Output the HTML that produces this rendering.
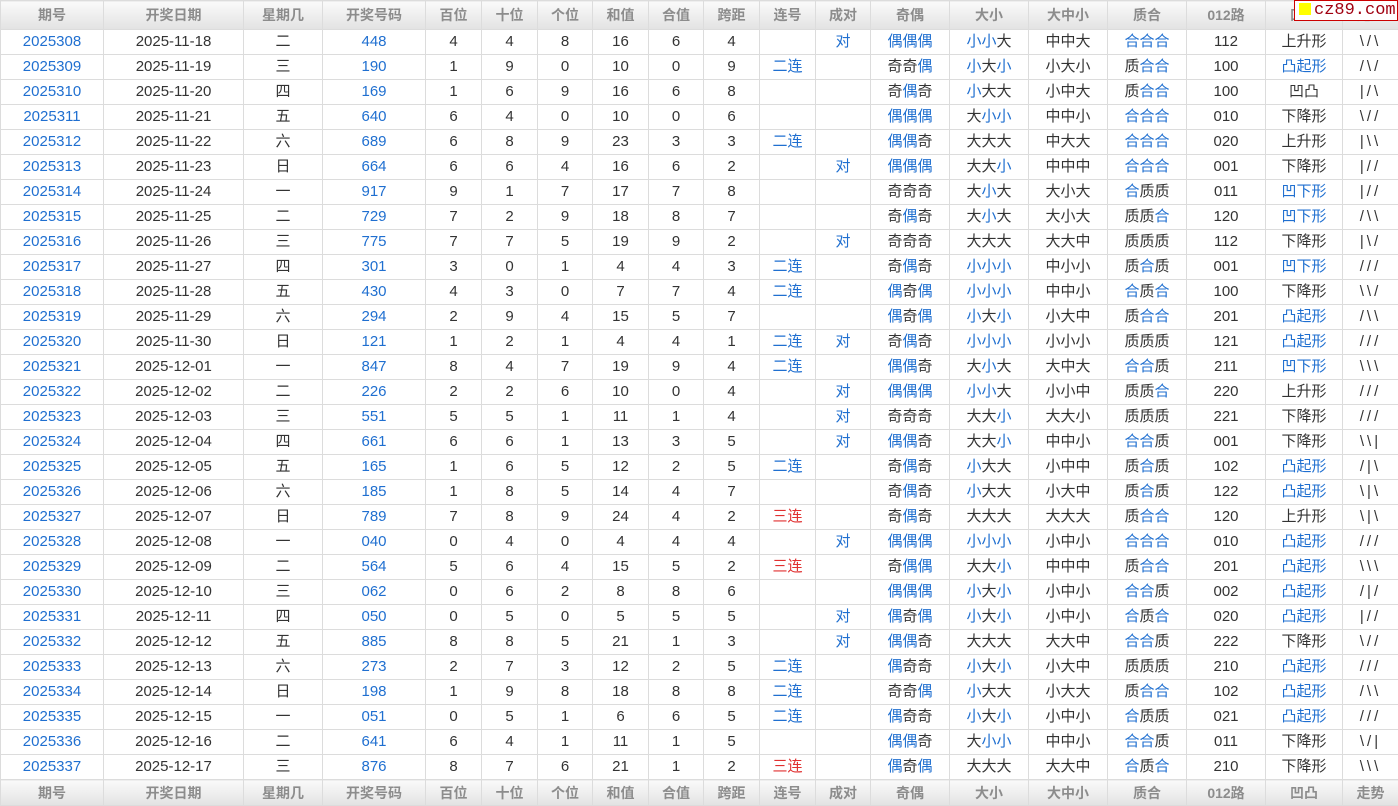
<!DOCTYPE html>
<html><head><meta charset="utf-8"><style>
body{margin:0;background:#fff;font-family:"Liberation Sans","Noto Sans CJK SC",sans-serif;}
table{border-collapse:collapse;table-layout:fixed;width:1398px;font-size:15px;color:#333;}
td,th{border:1px solid #dcdcdc;text-align:center;padding:0;white-space:nowrap;overflow:hidden;}
tr.d td{height:24px;line-height:24px;}
th{height:28px;background:linear-gradient(#fafafa,#e2e2e2);color:#8c8c8c;font-weight:bold;font-size:14px;}
tr.f th{height:25px;}
em{font-style:normal;color:#1f6fd0;}
.r{color:#e03030;}
td.q{color:#1f6fd0;}
td:last-child{letter-spacing:3px;}
#logo{position:absolute;left:1294px;top:0;width:104px;height:21px;background:#fff;border:1px solid #c00;box-sizing:border-box;font-family:"Liberation Mono",monospace;color:#a00010;font-size:17px;line-height:19px;white-space:nowrap;overflow:hidden;}
#logo span{display:inline-block;width:12px;height:12px;background:#ff0;margin:0 3px 0 4px;vertical-align:-1px;}
</style></head><body>
<div id="logo"><span></span>cz89.com</div>
<table>
<colgroup><col style="width:103px"><col style="width:140px"><col style="width:79px"><col style="width:103px"><col style="width:56px"><col style="width:56px"><col style="width:55px"><col style="width:56px"><col style="width:55px"><col style="width:56px"><col style="width:56px"><col style="width:55px"><col style="width:79px"><col style="width:79px"><col style="width:79px"><col style="width:79px"><col style="width:79px"><col style="width:77px"><col style="width:56px"></colgroup>
<tr><th>期号</th><th>开奖日期</th><th>星期几</th><th>开奖号码</th><th>百位</th><th>十位</th><th>个位</th><th>和值</th><th>合值</th><th>跨距</th><th>连号</th><th>成对</th><th>奇偶</th><th>大小</th><th>大中小</th><th>质合</th><th>012路</th><th>凹凸</th><th>走势</th></tr>
<tr class="d"><td class="q">2025308</td><td>2025-11-18</td><td>二</td><td class="q">448</td><td>4</td><td>4</td><td>8</td><td>16</td><td>6</td><td>4</td><td></td><td><em>对</em></td><td><em>偶偶偶</em></td><td><em>小小</em>大</td><td>中中大</td><td><em>合合合</em></td><td>112</td><td>上升形</td><td>\/\</td></tr>
<tr class="d"><td class="q">2025309</td><td>2025-11-19</td><td>三</td><td class="q">190</td><td>1</td><td>9</td><td>0</td><td>10</td><td>0</td><td>9</td><td><em>二连</em></td><td></td><td>奇奇<em>偶</em></td><td><em>小</em>大<em>小</em></td><td>小大小</td><td>质<em>合合</em></td><td>100</td><td><em>凸起形</em></td><td>/\/</td></tr>
<tr class="d"><td class="q">2025310</td><td>2025-11-20</td><td>四</td><td class="q">169</td><td>1</td><td>6</td><td>9</td><td>16</td><td>6</td><td>8</td><td></td><td></td><td>奇<em>偶</em>奇</td><td><em>小</em>大大</td><td>小中大</td><td>质<em>合合</em></td><td>100</td><td>凹凸</td><td>|/\</td></tr>
<tr class="d"><td class="q">2025311</td><td>2025-11-21</td><td>五</td><td class="q">640</td><td>6</td><td>4</td><td>0</td><td>10</td><td>0</td><td>6</td><td></td><td></td><td><em>偶偶偶</em></td><td>大<em>小小</em></td><td>中中小</td><td><em>合合合</em></td><td>010</td><td>下降形</td><td>\//</td></tr>
<tr class="d"><td class="q">2025312</td><td>2025-11-22</td><td>六</td><td class="q">689</td><td>6</td><td>8</td><td>9</td><td>23</td><td>3</td><td>3</td><td><em>二连</em></td><td></td><td><em>偶偶</em>奇</td><td>大大大</td><td>中大大</td><td><em>合合合</em></td><td>020</td><td>上升形</td><td>|\\</td></tr>
<tr class="d"><td class="q">2025313</td><td>2025-11-23</td><td>日</td><td class="q">664</td><td>6</td><td>6</td><td>4</td><td>16</td><td>6</td><td>2</td><td></td><td><em>对</em></td><td><em>偶偶偶</em></td><td>大大<em>小</em></td><td>中中中</td><td><em>合合合</em></td><td>001</td><td>下降形</td><td>|//</td></tr>
<tr class="d"><td class="q">2025314</td><td>2025-11-24</td><td>一</td><td class="q">917</td><td>9</td><td>1</td><td>7</td><td>17</td><td>7</td><td>8</td><td></td><td></td><td>奇奇奇</td><td>大<em>小</em>大</td><td>大小大</td><td><em>合</em>质质</td><td>011</td><td><em>凹下形</em></td><td>|//</td></tr>
<tr class="d"><td class="q">2025315</td><td>2025-11-25</td><td>二</td><td class="q">729</td><td>7</td><td>2</td><td>9</td><td>18</td><td>8</td><td>7</td><td></td><td></td><td>奇<em>偶</em>奇</td><td>大<em>小</em>大</td><td>大小大</td><td>质质<em>合</em></td><td>120</td><td><em>凹下形</em></td><td>/\\</td></tr>
<tr class="d"><td class="q">2025316</td><td>2025-11-26</td><td>三</td><td class="q">775</td><td>7</td><td>7</td><td>5</td><td>19</td><td>9</td><td>2</td><td></td><td><em>对</em></td><td>奇奇奇</td><td>大大大</td><td>大大中</td><td>质质质</td><td>112</td><td>下降形</td><td>|\/</td></tr>
<tr class="d"><td class="q">2025317</td><td>2025-11-27</td><td>四</td><td class="q">301</td><td>3</td><td>0</td><td>1</td><td>4</td><td>4</td><td>3</td><td><em>二连</em></td><td></td><td>奇<em>偶</em>奇</td><td><em>小小小</em></td><td>中小小</td><td>质<em>合</em>质</td><td>001</td><td><em>凹下形</em></td><td>///</td></tr>
<tr class="d"><td class="q">2025318</td><td>2025-11-28</td><td>五</td><td class="q">430</td><td>4</td><td>3</td><td>0</td><td>7</td><td>7</td><td>4</td><td><em>二连</em></td><td></td><td><em>偶</em>奇<em>偶</em></td><td><em>小小小</em></td><td>中中小</td><td><em>合</em>质<em>合</em></td><td>100</td><td>下降形</td><td>\\/</td></tr>
<tr class="d"><td class="q">2025319</td><td>2025-11-29</td><td>六</td><td class="q">294</td><td>2</td><td>9</td><td>4</td><td>15</td><td>5</td><td>7</td><td></td><td></td><td><em>偶</em>奇<em>偶</em></td><td><em>小</em>大<em>小</em></td><td>小大中</td><td>质<em>合合</em></td><td>201</td><td><em>凸起形</em></td><td>/\\</td></tr>
<tr class="d"><td class="q">2025320</td><td>2025-11-30</td><td>日</td><td class="q">121</td><td>1</td><td>2</td><td>1</td><td>4</td><td>4</td><td>1</td><td><em>二连</em></td><td><em>对</em></td><td>奇<em>偶</em>奇</td><td><em>小小小</em></td><td>小小小</td><td>质质质</td><td>121</td><td><em>凸起形</em></td><td>///</td></tr>
<tr class="d"><td class="q">2025321</td><td>2025-12-01</td><td>一</td><td class="q">847</td><td>8</td><td>4</td><td>7</td><td>19</td><td>9</td><td>4</td><td><em>二连</em></td><td></td><td><em>偶偶</em>奇</td><td>大<em>小</em>大</td><td>大中大</td><td><em>合合</em>质</td><td>211</td><td><em>凹下形</em></td><td>\\\</td></tr>
<tr class="d"><td class="q">2025322</td><td>2025-12-02</td><td>二</td><td class="q">226</td><td>2</td><td>2</td><td>6</td><td>10</td><td>0</td><td>4</td><td></td><td><em>对</em></td><td><em>偶偶偶</em></td><td><em>小小</em>大</td><td>小小中</td><td>质质<em>合</em></td><td>220</td><td>上升形</td><td>///</td></tr>
<tr class="d"><td class="q">2025323</td><td>2025-12-03</td><td>三</td><td class="q">551</td><td>5</td><td>5</td><td>1</td><td>11</td><td>1</td><td>4</td><td></td><td><em>对</em></td><td>奇奇奇</td><td>大大<em>小</em></td><td>大大小</td><td>质质质</td><td>221</td><td>下降形</td><td>///</td></tr>
<tr class="d"><td class="q">2025324</td><td>2025-12-04</td><td>四</td><td class="q">661</td><td>6</td><td>6</td><td>1</td><td>13</td><td>3</td><td>5</td><td></td><td><em>对</em></td><td><em>偶偶</em>奇</td><td>大大<em>小</em></td><td>中中小</td><td><em>合合</em>质</td><td>001</td><td>下降形</td><td>\\|</td></tr>
<tr class="d"><td class="q">2025325</td><td>2025-12-05</td><td>五</td><td class="q">165</td><td>1</td><td>6</td><td>5</td><td>12</td><td>2</td><td>5</td><td><em>二连</em></td><td></td><td>奇<em>偶</em>奇</td><td><em>小</em>大大</td><td>小中中</td><td>质<em>合</em>质</td><td>102</td><td><em>凸起形</em></td><td>/|\</td></tr>
<tr class="d"><td class="q">2025326</td><td>2025-12-06</td><td>六</td><td class="q">185</td><td>1</td><td>8</td><td>5</td><td>14</td><td>4</td><td>7</td><td></td><td></td><td>奇<em>偶</em>奇</td><td><em>小</em>大大</td><td>小大中</td><td>质<em>合</em>质</td><td>122</td><td><em>凸起形</em></td><td>\|\</td></tr>
<tr class="d"><td class="q">2025327</td><td>2025-12-07</td><td>日</td><td class="q">789</td><td>7</td><td>8</td><td>9</td><td>24</td><td>4</td><td>2</td><td class="r">三连</td><td></td><td>奇<em>偶</em>奇</td><td>大大大</td><td>大大大</td><td>质<em>合合</em></td><td>120</td><td>上升形</td><td>\|\</td></tr>
<tr class="d"><td class="q">2025328</td><td>2025-12-08</td><td>一</td><td class="q">040</td><td>0</td><td>4</td><td>0</td><td>4</td><td>4</td><td>4</td><td></td><td><em>对</em></td><td><em>偶偶偶</em></td><td><em>小小小</em></td><td>小中小</td><td><em>合合合</em></td><td>010</td><td><em>凸起形</em></td><td>///</td></tr>
<tr class="d"><td class="q">2025329</td><td>2025-12-09</td><td>二</td><td class="q">564</td><td>5</td><td>6</td><td>4</td><td>15</td><td>5</td><td>2</td><td class="r">三连</td><td></td><td>奇<em>偶偶</em></td><td>大大<em>小</em></td><td>中中中</td><td>质<em>合合</em></td><td>201</td><td><em>凸起形</em></td><td>\\\</td></tr>
<tr class="d"><td class="q">2025330</td><td>2025-12-10</td><td>三</td><td class="q">062</td><td>0</td><td>6</td><td>2</td><td>8</td><td>8</td><td>6</td><td></td><td></td><td><em>偶偶偶</em></td><td><em>小</em>大<em>小</em></td><td>小中小</td><td><em>合合</em>质</td><td>002</td><td><em>凸起形</em></td><td>/|/</td></tr>
<tr class="d"><td class="q">2025331</td><td>2025-12-11</td><td>四</td><td class="q">050</td><td>0</td><td>5</td><td>0</td><td>5</td><td>5</td><td>5</td><td></td><td><em>对</em></td><td><em>偶</em>奇<em>偶</em></td><td><em>小</em>大<em>小</em></td><td>小中小</td><td><em>合</em>质<em>合</em></td><td>020</td><td><em>凸起形</em></td><td>|//</td></tr>
<tr class="d"><td class="q">2025332</td><td>2025-12-12</td><td>五</td><td class="q">885</td><td>8</td><td>8</td><td>5</td><td>21</td><td>1</td><td>3</td><td></td><td><em>对</em></td><td><em>偶偶</em>奇</td><td>大大大</td><td>大大中</td><td><em>合合</em>质</td><td>222</td><td>下降形</td><td>\//</td></tr>
<tr class="d"><td class="q">2025333</td><td>2025-12-13</td><td>六</td><td class="q">273</td><td>2</td><td>7</td><td>3</td><td>12</td><td>2</td><td>5</td><td><em>二连</em></td><td></td><td><em>偶</em>奇奇</td><td><em>小</em>大<em>小</em></td><td>小大中</td><td>质质质</td><td>210</td><td><em>凸起形</em></td><td>///</td></tr>
<tr class="d"><td class="q">2025334</td><td>2025-12-14</td><td>日</td><td class="q">198</td><td>1</td><td>9</td><td>8</td><td>18</td><td>8</td><td>8</td><td><em>二连</em></td><td></td><td>奇奇<em>偶</em></td><td><em>小</em>大大</td><td>小大大</td><td>质<em>合合</em></td><td>102</td><td><em>凸起形</em></td><td>/\\</td></tr>
<tr class="d"><td class="q">2025335</td><td>2025-12-15</td><td>一</td><td class="q">051</td><td>0</td><td>5</td><td>1</td><td>6</td><td>6</td><td>5</td><td><em>二连</em></td><td></td><td><em>偶</em>奇奇</td><td><em>小</em>大<em>小</em></td><td>小中小</td><td><em>合</em>质质</td><td>021</td><td><em>凸起形</em></td><td>///</td></tr>
<tr class="d"><td class="q">2025336</td><td>2025-12-16</td><td>二</td><td class="q">641</td><td>6</td><td>4</td><td>1</td><td>11</td><td>1</td><td>5</td><td></td><td></td><td><em>偶偶</em>奇</td><td>大<em>小小</em></td><td>中中小</td><td><em>合合</em>质</td><td>011</td><td>下降形</td><td>\/|</td></tr>
<tr class="d"><td class="q">2025337</td><td>2025-12-17</td><td>三</td><td class="q">876</td><td>8</td><td>7</td><td>6</td><td>21</td><td>1</td><td>2</td><td class="r">三连</td><td></td><td><em>偶</em>奇<em>偶</em></td><td>大大大</td><td>大大中</td><td><em>合</em>质<em>合</em></td><td>210</td><td>下降形</td><td>\\\</td></tr>
<tr class="f"><th>期号</th><th>开奖日期</th><th>星期几</th><th>开奖号码</th><th>百位</th><th>十位</th><th>个位</th><th>和值</th><th>合值</th><th>跨距</th><th>连号</th><th>成对</th><th>奇偶</th><th>大小</th><th>大中小</th><th>质合</th><th>012路</th><th>凹凸</th><th>走势</th></tr>
</table>
</body></html>
